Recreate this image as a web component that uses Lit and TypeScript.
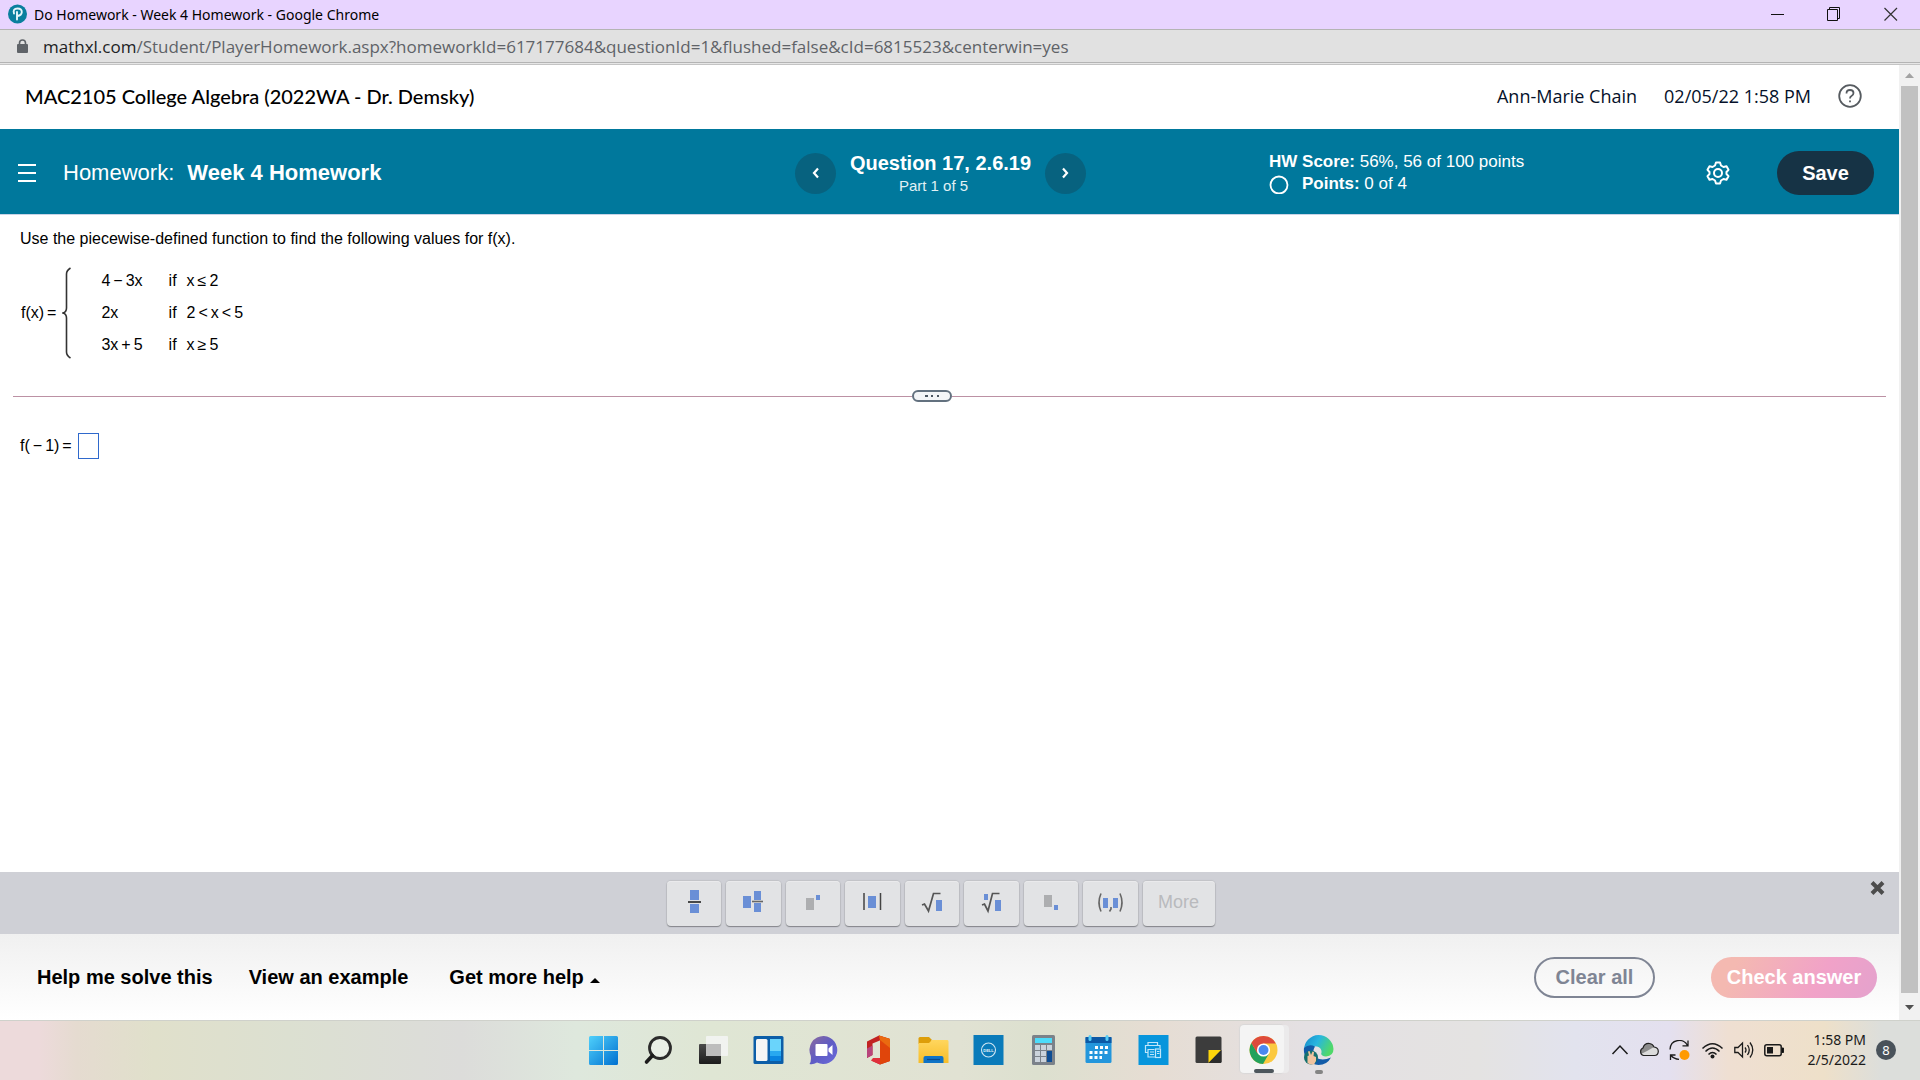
import { LitElement, html, css, svg } from "lit";
import { customElement } from "lit/decorators.js";

const box = (x: number, y: number, w: number, h: number, c = "#6a8fd6") =>
  svg`<rect x=${x} y=${y} width=${w} height=${h} fill=${c}></rect>`;

/* Math palette glyphs, drawn on a 32x28 canvas */
const PALETTE = [
  { name: "Fraction", art: svg`${box(12, 2, 9, 10)}${box(12, 16, 9, 9)}<path d="M10 14H23" stroke="#222" stroke-width="1.6"/>` },
  { name: "Mixed fraction", art: svg`${box(6, 8, 8, 12)}${box(17, 3, 7, 9)}${box(17, 15, 7, 9)}<path d="M15 13.500H26" stroke="#666" stroke-width="1.6"/>` },
  { name: "Exponent", art: svg`${box(9, 10, 8, 12, "#adaeb0")}${box(19, 7, 4, 5)}` },
  { name: "Absolute value", art: svg`${box(12, 8, 8, 12)}<path d="M8 5V22M24.500 5V22" stroke="#444" stroke-width="1.500"/>` },
  { name: "Square root", art: svg`${box(20, 12, 6, 11)}<path d="M6 17l2.500-1 4 7 5-17.500h7" fill="none" stroke="#555" stroke-width="1.7"/>` },
  { name: "Nth root", art: svg`${box(9, 6, 4, 6)}${box(20, 12, 6, 11)}<path d="M7 17l2.500-1 3.500 7 4.500-17.500h7" fill="none" stroke="#555" stroke-width="1.7"/>` },
  { name: "Subscript", art: svg`${box(9, 7, 8, 12, "#adaeb0")}${box(19, 17, 4, 5)}` },
  { name: "Ordered pair", art: svg`${box(9, 10, 5, 10)}${box(19, 10, 5, 10)}<path d="M7 5.500q-4 9 0 18M26 5.500q4 9 0 18M17 19v2l-1.500 2.500" fill="none" stroke="#666" stroke-width="1.600"/>` },
];

const APPS = [
  { name: "Start", art: svg`
    <defs><linearGradient id="wn" x1="0" y1="0" x2="1" y2="1"><stop offset="0" stop-color="#4fd0fb"/><stop offset="1" stop-color="#0070d0"/></linearGradient></defs>
    <path d="M2.500 1H15V15H1V2.500Q1 1 2.500 1ZM16 1H28.500Q30 1 30 2.500V15H16ZM1 16H15V30H2.500Q1 30 1 28.500ZM16 16H30V28.500Q30 30 28.500 30H16Z" fill="url(#wn)"/>` },
  { name: "Search", art: svg`
    <circle cx="17" cy="13" r="10.500" fill="#e9efe6" stroke="#2b2b2b" stroke-width="2.800"/><path d="M9.500 20.500L3.500 27" stroke="#1c1c1c" stroke-width="3.600" stroke-linecap="round"/>` },
  { name: "Task view", art: svg`
    <defs><linearGradient id="tv" x1="0" y1="0" x2="0" y2="1"><stop offset="0" stop-color="#4b4b4b"/><stop offset="1" stop-color="#1c1c1c"/></linearGradient></defs>
    <rect x="1" y="9" width="22" height="20" rx="1" fill="url(#tv)"/><rect x="8" y="1" width="22" height="20" rx="1" fill="#f4f4f4" opacity=".85"/><rect x="8" y="9" width="15" height="12" fill="#bdbdbd"/>` },
  { name: "Widgets", art: svg`
    <rect x="0.500" y="1" width="30" height="28" rx="1.500" fill="#0c5ea8"/><rect x="3" y="4" width="11.500" height="22" rx="1.500" fill="#f5f5f5"/><rect x="17" y="4" width="11" height="12" fill="#6ad4fb"/><rect x="17" y="16" width="11" height="5" fill="#28a8f0"/><rect x="17" y="21" width="11" height="5" fill="#0a84e0"/>` },
  { name: "Chat", art: svg`
    <defs><linearGradient id="ch" x1="0" y1="0" x2="1" y2="1"><stop offset="0" stop-color="#8d6a9c"/><stop offset=".5" stop-color="#5f5cc4"/><stop offset="1" stop-color="#6a6bdc"/></linearGradient></defs>
    <path d="M16 1A14 14 0 1 1 9 27.500Q5 30 1.500 29Q3.500 26 2.800 21A14 14 0 0 1 16 1Z" fill="url(#ch)"/><rect x="7.500" y="9" width="12" height="12" rx="1" fill="#fff"/><path d="M20.500 13.500l4-3.500v10l-4-3.500Z" fill="#fff"/>` },
  { name: "Office", art: svg`
    <path d="M16 .5L27 4V26L17 29.500L8 25.500H18V5L9.500 8.500V20L4 23V6.500Z" fill="#c22222"/><path d="M16 .5L27 4V26L17 29.500V5Z" fill="#e0450b"/><path d="M16 .5L27 4V13L17 5Z" fill="#ea6a10"/><path d="M4 13.500L9.500 10.500V20L4 23Z" fill="#b8447c"/><path d="M8 25.500L10 23H17V29.500Z" fill="#e0303c"/>` },
  { name: "File Explorer", art: svg`
    <defs><linearGradient id="fx" x1="0" y1="0" x2="0" y2="1"><stop offset="0" stop-color="#ffd65e"/><stop offset="1" stop-color="#f7bd28"/></linearGradient></defs>
    <path d="M.5 3.500Q.5 2 2 2H11L13.500 4.500V9H.5Z" fill="#dd9e0a"/><path d="M.5 8H11L14 5H29.500Q30.500 5 30.500 6.500V28H.5Z" fill="url(#fx)"/><path d="M5.500 28V23Q5.500 21 7.500 21H23.500Q25.500 21 25.500 23V28Z" fill="#0f73c6"/><path d="M9 24.500H22" stroke="#0a4a8c" stroke-width="1.200"/>` },
  { name: "Dell", art: svg`
    <rect x=".5" y="0" width="30" height="30" fill="#0a7bba"/><circle cx="15.500" cy="15" r="7" fill="none" stroke="#cfe6f3" stroke-width="1.100"/><text x="15.500" y="17" text-anchor="middle" font-family="Liberation Sans, sans-serif" font-weight="700" font-size="4" fill="#e4f1f8">DELL</text>` },
  { name: "Calculator", art: svg`
    <rect x="4" y="0" width="23" height="30" rx="1.500" fill="#7b828a"/><rect x="7" y="3" width="17" height="5" fill="#4ddcfb"/>
    <g fill="#cbd3dc"><rect x="7" y="10" width="5" height="5"/><rect x="13" y="10" width="5" height="5"/><rect x="19" y="10" width="5" height="5"/><rect x="7" y="16" width="5" height="5"/><rect x="13" y="16" width="5" height="5"/><rect x="7" y="22" width="5" height="5"/><rect x="13" y="22" width="5" height="5"/></g><rect x="19" y="16" width="5" height="11" fill="#0e4d94"/>` },
  { name: "Calendar", art: svg`
    <rect x="2.500" y="2" width="26" height="26" rx="1.500" fill="#2396dc"/><rect x="2.500" y="2" width="26" height="6" fill="#0c59a6"/><rect x="5.500" y="0" width="3" height="6" rx="1.500" fill="#56cdf5"/><rect x="22.500" y="0" width="3" height="6" rx="1.500" fill="#56cdf5"/>
    <path d="M12 12.500H25M6.500 17.500H25M6.500 22.500H19" stroke="#fff" stroke-width="3" stroke-dasharray="3 2"/>` },
  { name: "Printer", art: svg`
    <rect x=".5" y="0" width="30" height="30" fill="#0795dc"/><g fill="none" stroke="#bfe6fa" stroke-width="1.200"><path d="M10 10V7.500H19.500V10M9.500 17.500H7.500V10.500H22V13M9.500 14.500H16.500M10 14.500V22H17M12 17H16M12 19.500H16"/><rect x="17.500" y="14" width="5" height="8.500"/><path d="M19 16.500H21.500M19 18.500H21.500"/></g>` },
  { name: "Sticky Notes", art: svg`
    <rect x="2.500" y="1.500" width="26" height="26.500" rx="1.500" fill="#3c3c3c"/><path d="M15.500 15H28L15.500 28Z" fill="#fdd50b"/><path d="M28.500 15V26.500Q28.500 28 27 28H15.500Z" fill="#2b2b2b"/>` },
  { name: "Chrome", open: "wide", art: svg`
    <circle cx="15.500" cy="15" r="14" fill="#fbc940"/><path d="M3.400 8A14 14 0 0 0 15 29L21 18.500L15.500 15L9.500 18Z" fill="#23a25c"/><path d="M3.400 8L9.500 18.500L15.500 8.500H27.800A14 14 0 0 0 3.400 8Z" fill="#de4b3c"/><circle cx="15.500" cy="15" r="6.600" fill="#fff"/><circle cx="15.500" cy="15" r="5" fill="#4a88f0"/>` },
  { name: "Edge", open: "small", art: svg`
    <defs><linearGradient id="ed" x1="0" y1="0" x2="1" y2=".4"><stop offset="0" stop-color="#1688c8"/><stop offset=".5" stop-color="#28b6e0"/><stop offset="1" stop-color="#4fd86a"/></linearGradient></defs>
    <path d="M15.500 0A15 15 0 0 1 30.500 14Q30.500 21 23 21.500Q17 21 18.500 17.500Q19 13 14 11.500Q6 10 1 15A15 15 0 0 1 15.500 0Z" fill="url(#ed)"/><path d="M1 13Q6 8.500 12 11.500Q8 18 13 22.500Q19 26.500 28 22.500Q24 30 15.500 30A15 15 0 0 1 1 13Z" fill="#125ba8"/><circle cx="8" cy="22.500" r="7" fill="#15706e"/><path d="M4.500 28V21L6 20.500L5 16.500L6.500 16L8 20L9.500 16.500L11 17L10.500 21L13 22V26L11 29.500Q7 30 4.500 28Z" fill="#f0c3a0"/>` },
];

const CASES = [
  [html`4<i class="op">−</i>3x`, html`x<i class="op">≤</i>2`],
  [html`2x`, html`2<i class="op">&lt;</i>x<i class="op">&lt;</i>5`],
  [html`3x<i class="op">+</i>5`, html`x<i class="op">≥</i>5`],
];

@customElement("app-root")
export class AppRoot extends LitElement {
  static styles = css`
    :host { display: flex; flex-direction: column; min-height: 100vh; background: #fff; color: #000; font-family: "Liberation Sans", Arial, sans-serif; font-size: 16px; }
    * { box-sizing: border-box; }
    button, input { font: inherit; color: inherit; margin: 0; padding: 0; border: 0; background: none; }
    svg { display: block; flex: none; }
    a { color: inherit; text-decoration: none; }
    .titlebar { height: 29px; display: flex; align-items: center; gap: 6px; padding: 0 21px 1px 8px; background: #e8d4ff; font: 14px "Noto Sans", sans-serif; }
    .titlebar span { flex: 1; }
    .win { display: flex; gap: 41px; }
    .address { height: 36px; display: flex; align-items: center; gap: 15px; padding: 0 17px 3px; border-top: 1px solid #b4b4b4; background: linear-gradient(#e1e1e1 32px, #b4b4b4 32px 33px, #e6e6e6 33px 34px, #c4c4c4 34px); color: #5f6368; font: 17px "Open Sans", sans-serif; }
    .address b { font-weight: 400; color: #202124; }
    .view { flex: 1; display: flex; }
    .page { flex: 1; min-width: 0; display: flex; flex-direction: column; }
    .scroll { width: 21px; background: #f1f1f1; display: flex; flex-direction: column; align-items: center; justify-content: space-between; }
    .scroll svg { margin: 8px 0; }
    .scroll .down { margin: 12px 0 10px; }
    .thumb { flex: 1; width: 17px; background: #c1c1c1; }
    .course { height: 64px; display: flex; align-items: center; gap: 27px; padding: 0 37px 2px 25px; color: #05112a; }
    .course h1 { flex: 1; margin: 0; font: 500 20px Lato, sans-serif; color: #000; }
    .user { font: 18px "Open Sans", sans-serif; }
    .band { height: 86px; display: grid; grid-template-columns: 795px 291px 1fr auto; align-items: center; background: #00789c; border-bottom: 1px solid #c8d3e6; padding: 3px 25px 0 0; color: #fff; }
    .hw { display: flex; align-items: center; gap: 27px; padding-left: 18px; font-size: 22px; }
    .hw h2 { margin: 0; font: inherit; }
    .hw b { margin-left: 7px; }
    .nav { display: flex; align-items: center; justify-content: space-between; }
    .nav h3 { margin: 0 0 3px; font-size: 20px; line-height: 22px; }
    .nav p { margin: 0; padding-right: 14px; font-size: 15px; line-height: 17px; text-align: center; color: #e2f1f5; }
    .round { width: 41px; height: 41px; border-radius: 50%; background: #07627f; display: grid; place-items: center; }
    .score { padding-left: 183px; font-size: 17px; line-height: 22px; }
    .pts { display: flex; align-items: center; gap: 13px; }
    .acts { display: flex; align-items: center; gap: 47px; }
    .save { width: 97px; height: 44px; border-radius: 22px; background: #163345; font-weight: 700; font-size: 20px; }
    .work { flex: 1; padding: 14px 13px 0; }
    .work p { margin: 0; padding-left: 7px; line-height: 20px; }
    .fn { display: flex; align-items: center; padding-left: 8px; margin-top: 18px; }
    .fn svg { margin: 0 30px 0 6px; }
    .op { font-style: normal; margin: 0 3px; }
    .eq { margin-right: 0; }
    .cases { display: grid; grid-template-columns: auto auto auto; line-height: 20px; row-gap: 12px; }
    .if { padding: 0 10px 0 26px; }
    .divider { display: flex; align-items: center; margin: 31px 0; }
    .divider::before, .divider::after { content: ""; flex: 1; height: 1px; background: #bc91a4; }
    .divider::before { flex: 0 0 48%; }
    .pill { width: 40px; height: 12px; border: 2px solid #63717f; border-radius: 6px; background: #f3f5f7; display: grid; place-items: center; }
    .answer { display: flex; align-items: center; gap: 6px; padding-left: 7px; }
    .answer input { width: 21px; height: 26px; border: 1px solid #2f69cc; }
    .palette { height: 62px; display: grid; grid-template-columns: 1fr 548px 1fr; align-items: start; padding: 9px 14px 0 0; background: #cfd0d6; }
    .keys { grid-column: 2; display: grid; grid-template-columns: repeat(8, 1fr) 72px; gap: 5px; position: relative; left: -2px; }
    .keys button { height: 45px; border-radius: 4px; background: #e2e3e5; box-shadow: 0 1px 1px #85868b, 0 0 1px 1px #c1c2c7, inset 0 1px #eaeaec; display: grid; place-items: center; }
    .keys svg { margin-top: -3px; }
    .keys .more { font-size: 18px; color: #b9babd; padding-bottom: 2px; }
    .close { justify-self: end; }
    .foot { height: 86px; display: flex; align-items: center; padding: 0 22px 0 37px; background: linear-gradient(#f0f0f0, #fff); font-weight: 700; font-size: 20px; }
    .foot nav { flex: 1; display: flex; gap: 36px; }
    .foot a { display: flex; align-items: center; gap: 6px; }
    .foot .help { margin-left: 5px; }
    .help svg { margin-top: 6px; }
    .clear { width: 121px; height: 41px; border: 2px solid #7f8594; border-radius: 21px; color: #7f8594; margin-right: 56px; }
    .check { width: 166px; height: 41px; border-radius: 21px; color: #fff; background: linear-gradient(115deg, #f4b9b1 15%, #f1a2c8 65%, #e4a2cd); }
    .taskbar { height: 60px; display: grid; grid-template-columns: 1fr auto 1fr; align-items: center; border-top: 1px solid #cfd1cb; padding: 0 0 2px 2px;
      background: linear-gradient(90deg, #eddadb 2%, #e5dbd0 4%, #e0e0cb 8%, #dce0d1 15%, #dcdcda 24%, #dee8dd 30%, #dfe6d4 37%, #e1e2d3 50%, #dce0cf 54%, #e6ddd3 60%, #e4e0e3 68%, #e4e3e2 77%, #e2e3ee 82%, #e4e0ef 87%, #efdfd2 90%, #eee0c9 95%, #dcdedb 98%); }
    .apps { grid-column: 2; display: flex; }
    .app { width: 55px; height: 57px; display: grid; place-items: center; position: relative; }
    .app svg { position: relative; }
    .app.wide::before { content: ""; position: absolute; inset: 4px 7px 5px 4px; border-radius: 4px; background: #f4f4f4; box-shadow: 5px 0 #ebeaeb, 0 0 1px 1px #d9d8d8; }
    .app::after { position: absolute; bottom: 5px; height: 4px; border-radius: 2px; }
    .app.wide::after { content: ""; width: 20px; background: #4d565c; }
    .app.small::after { content: ""; width: 8px; bottom: 4px; background: #848484; }
    .tray { justify-self: end; display: flex; align-items: center; gap: 10px; padding-right: 24px; }
    .clock { width: 72px; text-align: right; font: 14px "Noto Sans", sans-serif; line-height: 20px; color: #1b1b1b; }
    .badge { width: 20px; height: 20px; border-radius: 50%; background: #49525a; color: #fff; font: 13px "Noto Sans", sans-serif; line-height: 20px; text-align: center; }
  `;

  render() {
    return html`
      <header class="titlebar">
        <svg width="20" height="20" viewBox="0 0 20 20"><circle cx="9.500" cy="10" r="9.500" fill="#0a7f9e"/><path d="M6 9.500Q4.500 4.500 9.500 4.500Q14 4.500 13.800 8.200Q13.500 11.500 9.500 12M9 8V15.500" fill="none" stroke="#e6f6fa" stroke-width="1.900" stroke-linecap="round"/></svg>
        <span>Do Homework - Week 4 Homework - Google Chrome</span>
        <div class="win">
          <button aria-label="Minimize"><svg width="16" height="16" viewBox="0 0 16 16" stroke="#111"><path d="M2 8.500H15"/></svg></button>
          <button aria-label="Restore"><svg width="16" height="16" viewBox="0 0 16 16" fill="none" stroke="#111"><path d="M1.500 3.500H11.500V14.500H1.500ZM3.500 3.500V1.500H13.500V12.500H11.500"/></svg></button>
          <button aria-label="Close"><svg width="16" height="16" viewBox="0 0 16 16" stroke="#333" stroke-width="1.200"><path d="M1.500 2L14 14.500M14 2L1.500 14.500"/></svg></button>
        </div>
      </header>
      <div class="address">
        <svg width="11" height="15" viewBox="0 0 11 15"><rect y="5" width="11" height="9" rx="1" fill="#5f6368"/><path d="M2.500 6V4a3 3 0 0 1 6 0V6" fill="none" stroke="#5f6368" stroke-width="1.600"/></svg>
        <span><b>mathxl.com</b>/Student/PlayerHomework.aspx?homeworkId=617177684&amp;questionId=1&amp;flushed=false&amp;cId=6815523&amp;centerwin=yes</span>
      </div>
      <div class="view">
        <div class="page">
          <div class="course">
            <h1>MAC2105 College Algebra (2022WA - Dr. Demsky)</h1>
            <span class="user">Ann-Marie Chain</span><span class="user">02/05/22 1:58 PM</span>
            <button aria-label="Help"><svg width="24" height="24" viewBox="0 0 24 24" fill="none" stroke="#565b60" stroke-width="1.800"><circle cx="12" cy="12" r="10.800"/><path d="M8.500 9.500Q8.500 6 12 6T15.500 9Q15.500 11 13.500 12Q12 12.800 12 14.500"/><path d="M12 16.500V18.300"/></svg></button>
          </div>
          <div class="band">
            <div class="hw">
              <button aria-label="Menu"><svg width="18" height="18" viewBox="0 0 18 18" stroke="#fff" stroke-width="2"><path d="M0 1H18M0 9H18M0 17H18"/></svg></button>
              <h2>Homework: <b>Week 4 Homework</b></h2>
            </div>
            <div class="nav">
              <button class="round" aria-label="Previous question"><svg width="8" height="12" viewBox="0 0 8 12" fill="none" stroke="#fff" stroke-width="2.200"><path d="M6 1.500L2 6L6 10.500"/></svg></button>
              <div><h3>Question 17, 2.6.19</h3><p>Part 1 of 5</p></div>
              <button class="round" aria-label="Next question"><svg width="8" height="12" viewBox="0 0 8 12" fill="none" stroke="#fff" stroke-width="2.200"><path d="M2 1.500L6 6L2 10.500"/></svg></button>
            </div>
            <div class="score">
              <div><b>HW Score:</b> 56%, 56 of 100 points</div>
              <div class="pts"><svg width="20" height="20" viewBox="0 0 20 20"><circle cx="10" cy="11" r="8.500" fill="none" stroke="#fff" stroke-width="1.800"/></svg><span><b>Points:</b> 0 of 4</span></div>
            </div>
            <div class="acts">
              <button aria-label="Settings"><svg width="24" height="24" viewBox="0 0 24 24" fill="none" stroke="#fff" stroke-width="2" stroke-linejoin="round"><path d="M10 1.500H14L15 4.500L17.500 6L20.500 5.300L22.500 8.800L20.500 11V13L22.500 15.200L20.500 18.700L17.500 18L15 19.500L14 22.500H10L9 19.500L6.500 18L3.500 18.700L1.500 15.200L3.500 13V11L1.500 8.800L3.500 5.300L6.500 6L9 4.500Z"/><circle cx="12" cy="12" r="4"/></svg></button>
              <button class="save">Save</button>
            </div>
          </div>
          <main class="work">
            <p>Use the piecewise-defined function to find the following values for f(x).</p>
            <div class="fn">
              <span>f(x)<i class="op eq">=</i></span>
              <svg width="9" height="92" viewBox="0 0 9 92" fill="none" stroke="#333" stroke-width="1.600"><path d="M8.500 1Q4.500 3.500 4.500 7V41Q4.500 45 1 46Q4.500 47 4.500 51V85Q4.500 88.500 8.500 91"/></svg>
              <div class="cases">${CASES.map(([v, c]) => html`<span>${v}</span><span class="if">if</span><span>${c}</span>`)}</div>
            </div>
            <div class="divider"><button class="pill" aria-label="Resize panes"><svg width="16" height="2" viewBox="0 0 16 2" fill="#4a5560"><path d="M1 0h3v2H1ZM7 0h2v2H7ZM13 0h2v2H13Z"/></svg></button></div>
            <div class="answer"><label for="ans">f(<i class="op">−</i>1)<i class="op eq">=</i></label><input id="ans" type="text"></div>
          </main>
          <div class="palette">
            <div class="keys">
              ${PALETTE.map((k) => html`<button aria-label=${k.name}><svg width="32" height="28" viewBox="0 0 32 28">${k.art}</svg></button>`)}
              <button class="more">More</button>
            </div>
            <button class="close" aria-label="Close palette"><svg width="15" height="14" viewBox="0 0 15 14" stroke="#4c4c4c" stroke-width="4"><path d="M2 1.500L13 12.500M13 1.500L2 12.500"/></svg></button>
          </div>
          <div class="foot">
            <nav>
              <a href="#">Help me solve this</a><a href="#">View an example</a>
              <a class="help" href="#">Get more help <svg width="10" height="5" viewBox="0 0 10 5"><path d="M0 5L5 0L10 5Z"/></svg></a>
            </nav>
            <button class="clear">Clear all</button><button class="check">Check answer</button>
          </div>
        </div>
        <div class="scroll">
          <svg width="9" height="5" viewBox="0 0 9 5"><path d="M0 5L4.500 0L9 5Z" fill="#a3a3a3"/></svg>
          <div class="thumb"></div>
          <svg class="down" width="9" height="5" viewBox="0 0 9 5"><path d="M0 0L4.500 5L9 0Z" fill="#505050"/></svg>
        </div>
      </div>
      <footer class="taskbar">
        <div class="apps">${APPS.map((a) => html`<button class="app ${a.open ?? ""}" aria-label=${a.name}><svg width="31" height="30" viewBox="0 0 31 30">${a.art}</svg></button>`)}</div>
        <div class="tray">
          <svg width="18" height="20" viewBox="0 0 18 20" fill="none" stroke="#1b1b1b" stroke-width="1.500"><path d="M1.500 14L9 6L16.500 14"/></svg>
          <svg width="20" height="20" viewBox="0 0 20 20"><path d="M4.500 15.500A4 4 0 0 1 4 8Q5.500 3 10.500 3.500Q14 4 15 7Q19.300 7.500 19.300 11.500Q19 15.500 15.500 15.500Z" fill="#dcdcdc"/><path d="M4 8Q5.500 3 10.500 3.500Q14 4 15 7L8 11L2 14Q-.5 9.500 4 8Z" fill="#8c8c8c"/><path d="M4.500 15.500A4 4 0 0 1 4 8Q5.500 3 10.500 3.500Q14 4 15 7Q19.300 7.500 19.300 11.500Q19 15.500 15.500 15.500Z" fill="none" stroke="#222" stroke-width="1.200"/></svg>
          <svg width="21" height="20" viewBox="0 0 21 20" fill="none" stroke="#1b1b1b" stroke-width="1.300"><path d="M1 9.500C1.500 -1.500 15 -2 18.500 5.500M19 .5V5.800H13.500M1.500 20V15H6.500M2 15.500Q5 19 10 19.300"/><circle cx="15.500" cy="15" r="5" fill="#ff9a00" stroke="none"/></svg>
          <svg width="24" height="20" viewBox="0 0 24 20" fill="none" stroke="#1b1b1b" stroke-width="1.500"><path d="M2.500 8.500Q12.500 -1 22.500 8.500M5.500 11.500Q12.500 4.500 19.500 11.500M8.500 14.500Q12.500 10.500 16.500 14.500"/><circle cx="12.500" cy="16.500" r="2" fill="#1b1b1b" stroke="none"/></svg>
          <svg width="20" height="20" viewBox="0 0 20 20" fill="none" stroke="#1b1b1b" stroke-width="1.300"><path d="M.8 7.500H4L8.500 3V17L4 12.500H.8ZM11 7.500Q13 10 11 12.500M13.500 5Q17 10 13.500 15M16 2.500Q21.500 10 16 17.500"/></svg>
          <svg width="20" height="20" viewBox="0 0 20 20"><rect x=".8" y="4.800" width="16.400" height="11" rx="2" fill="none" stroke="#1b1b1b" stroke-width="1.500"/><rect x="3" y="7" width="6" height="6.500" fill="#1b1b1b"/><path d="M18 8h1.500v4.500H18Z" stroke="#1b1b1b"/></svg>
          <div class="clock">1:58 PM<br>2/5/2022</div>
          <div class="badge">8</div>
        </div>
      </footer>
    `;
  }
}
